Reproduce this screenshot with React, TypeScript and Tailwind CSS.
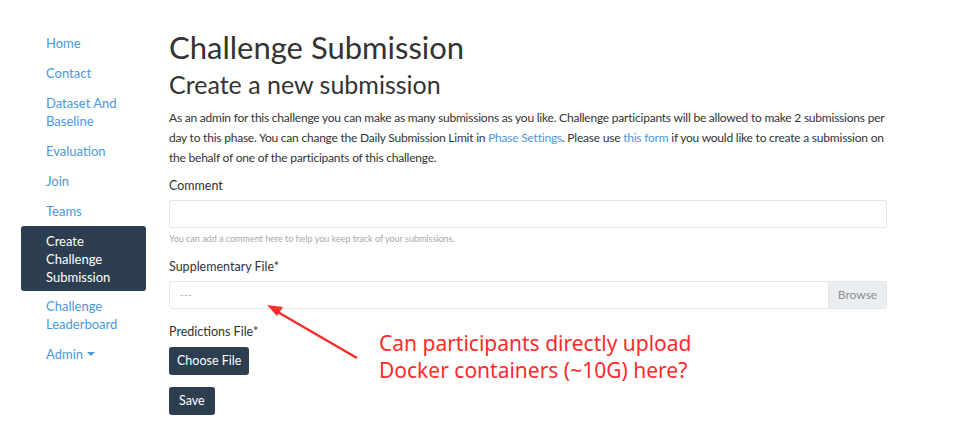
import { useState } from "react"

const links = [
    { label: "Home" },
    { label: "Contact" },
    { label: "Dataset And Baseline" },
    { label: "Evaluation" },
    { label: "Join" },
    { label: "Teams" },
    { label: "Create Challenge Submission", active: true },
    { label: "Challenge Leaderboard" },
]

function Sidebar() {
    return (
        <nav className="w-[125px] ml-[21px] mt-[28px] flex flex-col text-[13px] leading-[18px]">
            {links.map((l, i) => (
                <a
                    key={i}
                    className={
                        l.active
                            ? "block rounded-[3px] bg-[#2c3e50] text-white pl-[25px] pr-3 pt-[6px] pb-[5px] cursor-pointer"
                            : "block text-[#4a98e0] pl-[25px] pr-3 py-[6px] cursor-pointer"
                    }
                >
                    {l.label}
                </a>
            ))}
            <a className="flex items-center gap-[4px] text-[#4a98e0] pl-[25px] py-[6px] cursor-pointer">
                Admin
                <span className="inline-block w-0 h-0 border-l-[4px] border-r-[4px] border-t-[4px] border-l-transparent border-r-transparent border-t-[#4a98e0]"></span>
            </a>
        </nav>
    )
}

export default function App() {
    const [comment, setComment] = useState("")

    return (
        <div className="relative w-[976px] h-[432px] overflow-hidden bg-white text-[#333] font-['Lato','Open_Sans',sans-serif]">
            <div className="flex">
                <Sidebar />
                <main className="ml-[23px] w-[718px] pt-[28px]">
                    <h1 className="text-[31px] leading-[38px] text-[#333]">Challenge Submission</h1>
                    <h2 className="text-[25px] leading-[32px] mt-[2px] text-[#333]">Create a new submission</h2>
                    <p className="text-[12px] tracking-[-0.22px] leading-[20px] mt-[8px] text-[#333]">
                        As an admin for this challenge you can make as many submissions as you like. Challenge participants will be allowed to make 2 submissions per day to this phase. You can change the Daily Submission Limit in{" "}
                        <a className="text-[#4a98e0]">Phase Settings</a>. Please use <a className="text-[#4a98e0]">this form</a> if you would like to create a submission on the behalf of one of the participants of this challenge.
                    </p>

                    <label className="block text-[12.5px] leading-[20px] mt-[8px]">Comment</label>
                    <input
                        value={comment}
                        onChange={(e) => setComment(e.target.value)}
                        className="block w-full h-[28px] mt-[4px] rounded-[3px] border border-[#e3e6ea] px-2 text-[12px] outline-none"
                    />
                    <div className="text-[9px] leading-[14px] mt-[4px] text-[#a8a8a8]">You can add a comment here to help you keep track of your submissions.</div>

                    <label className="block text-[12.5px] leading-[20px] mt-[11px]">Supplementary File*</label>
                    <div className="flex w-full h-[28px] mt-[4px] rounded-[3px] border border-[#e3e6ea] overflow-hidden">
                        <div className="flex-1 px-[10px] text-[11px] leading-[26px] text-[#b8b8b8]">---</div>
                        <div className="w-[58px] bg-[#ebeef0] border-l border-[#e3e6ea] text-[12px] leading-[26px] text-center text-[#8a8f94]">Browse</div>
                    </div>

                    <label className="block text-[12.5px] leading-[20px] mt-[13px]">Predictions File*</label>
                    <button className="block mt-[5px] h-[28px] px-[8px] rounded-[3px] bg-[#2c3e50] text-white text-[12.5px]">Choose File</button>
                    <button className="block mt-[12px] h-[28px] px-[10px] rounded-[3px] bg-[#2c3e50] text-white text-[12.5px]">Save</button>
                </main>
            </div>

            {/* annotation */}
            <svg className="absolute left-0 top-0 pointer-events-none" width="976" height="432">
                <line x1="357" y1="358" x2="276" y2="311" stroke="#ff2a2a" strokeWidth="2.5" />
                <polygon points="267,305 283,307 277,316" fill="#ff2a2a" />
            </svg>
            <div className="absolute left-[379px] top-[330px] text-[#ff2a2a] text-[21px] leading-[27px] font-['Noto_Sans','Open_Sans',sans-serif]">
                Can participants directly upload<br />
                Docker containers (~10G) here?
            </div>
        </div>
    )
}
